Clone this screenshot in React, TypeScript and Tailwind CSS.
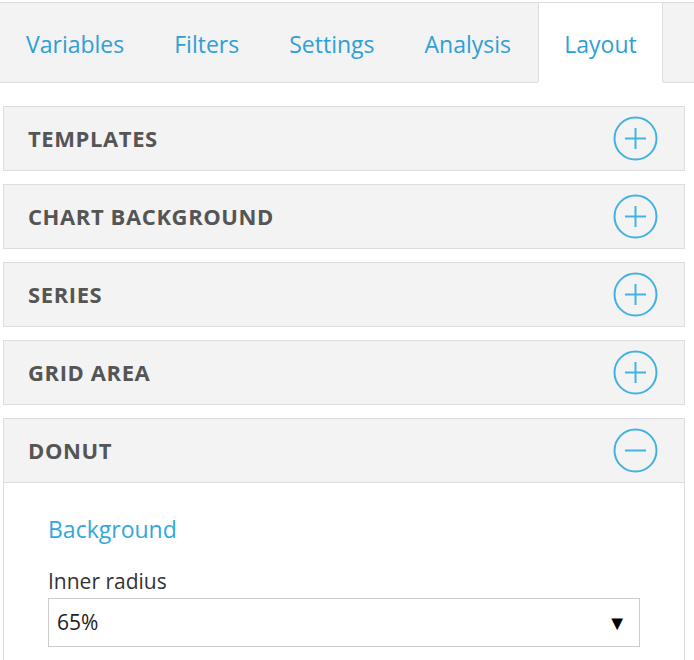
import React from "react";

function Icon({ open }: { open?: boolean }) {
  return (
    <svg width="45" height="45" viewBox="0 0 45 45" fill="none">
      <circle cx="22.5" cy="22.5" r="21" stroke="#43b2e2" strokeWidth="2" />
      <line x1="12" y1="22.5" x2="33" y2="22.5" stroke="#43b2e2" strokeWidth="2" />
      {!open && <line x1="22.5" y1="12" x2="22.5" y2="33" stroke="#43b2e2" strokeWidth="2" />}
    </svg>
  );
}

function Header({ title, open }: { title: string; open?: boolean }) {
  return (
    <div
      className={
        "flex h-[63px] items-center justify-between bg-[#f3f3f3] pl-[24px] pr-[26px] " +
        (open ? "h-[64px] border-b border-[#dddddd]" : "")
      }
    >
      <span className="text-[22px] font-bold tracking-[0.6px] text-[#555555]">{title}</span>
      <Icon open={open} />
    </div>
  );
}

export default function App() {
  const tabs = ["Variables", "Filters", "Settings", "Analysis"];
  return (
    <div className="h-[660px] w-[694px] overflow-hidden bg-white pt-[2px] font-['Open_Sans',sans-serif]">
      <div className="flex h-[81px]">
        <div className="flex w-[539px] items-center rounded-br-[3px] border-y border-r border-[#dddddd] bg-[#f3f3f3] pl-[1px] pt-[3px]">
          {tabs.map((t) => (
            <span key={t} className="px-[25px] text-[23px] text-[#2f9fd6]">
              {t}
            </span>
          ))}
        </div>
        <div className="flex w-[123px] items-center justify-center border-t border-[#dddddd] bg-white pt-[3px]">
          <span className="text-[23px] text-[#2f9fd6]">Layout</span>
        </div>
        <div className="flex-1 rounded-bl-[3px] border-y border-l border-[#dddddd] bg-[#f3f3f3]" />
      </div>

      <div className="ml-[3px] mt-[23px] flex w-[682px] flex-col gap-[13px]">
        {["TEMPLATES", "CHART BACKGROUND", "SERIES", "GRID AREA"].map((t) => (
          <div key={t} className="border border-[#dddddd]">
            <Header title={t} />
          </div>
        ))}
        <div className="border-x border-t border-[#dddddd]">
          <Header title="DONUT" open />
          <div className="bg-white px-[44px] pt-[31px] pb-[20px]">
            <div className="text-[23px] leading-[31px] text-[#33a7dc]">Background</div>
            <div className="mt-[22px] text-[21px] leading-[28px] text-[#333333]">Inner radius</div>
            <div className="mt-[3px] flex h-[49px] w-[592px] items-center justify-between border border-[#cccccc] pl-[8px] pr-[12px]">
              <span className="text-[21px] text-[#222222]">65%</span>
              <span className="text-[20px] leading-none text-black">▼</span>
            </div>
          </div>
        </div>
      </div>
    </div>
  );
}
